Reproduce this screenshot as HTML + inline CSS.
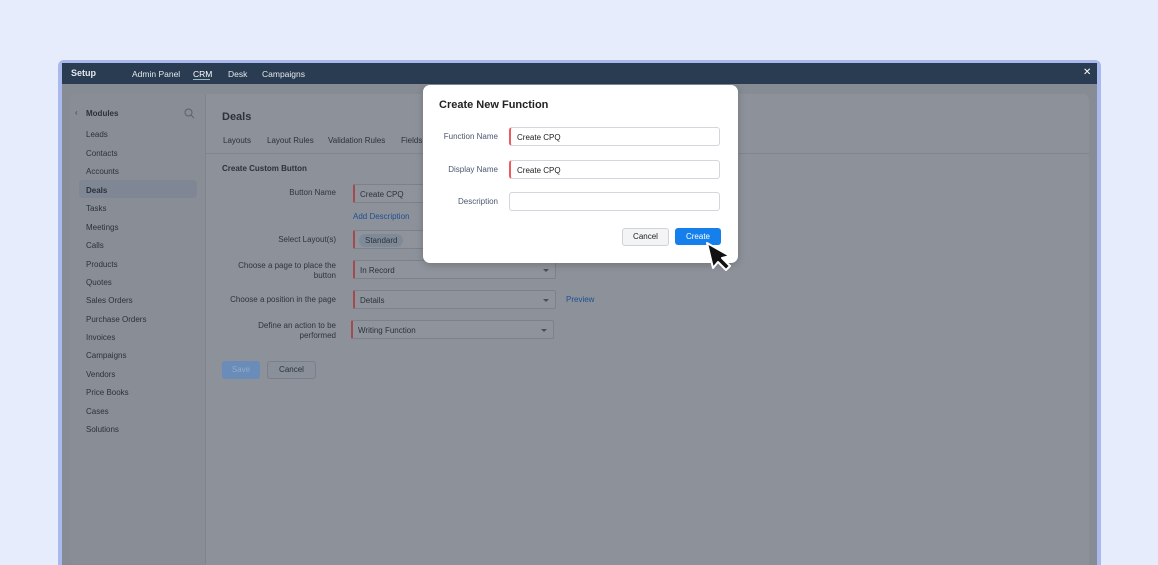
<!DOCTYPE html>
<html style="width:1158px;height:565px;overflow:hidden"><head><meta charset="utf-8"><style>
*{box-sizing:border-box;margin:0;padding:0}
body{width:1158px;height:565px;background:#e7ecfd;font-family:"Liberation Sans",sans-serif;position:relative;overflow:hidden}
.frame{position:absolute;left:58px;top:60px;width:1043px;height:515px;background:#a9b9ee;border-radius:6px}
.inner{position:absolute;left:62px;top:63px;width:1035px;height:510px;background:#868b94}
.hdr{position:absolute;left:0;top:0;width:100%;height:21px;background:#293c51;color:#e4e8ee;font-size:8.5px}
.hdr span{position:absolute;top:6px}
.side{position:absolute;left:8px;top:31px;width:136px;height:470px;background:#888d96;border-radius:6px 0 0 6px;border-right:1px solid #7e838c}
.main{position:absolute;left:144px;top:31px;width:883px;height:480px;background:#8d9199;border-radius:0 6px 0 0}
.t{position:absolute;font-size:8px;color:#2c323a;white-space:nowrap}
.lbl{position:absolute;font-size:8px;color:#2f353d;text-align:right;white-space:nowrap;line-height:10px}
.inp{position:absolute;height:19px;background:#8f939b;border:1px solid #7c818a;border-left:2px solid #a34a4f;border-radius:2px;font-size:8px;color:#2c323a;padding:5px 5px}
.car{position:absolute;right:6px;top:8px;border:3px solid transparent;border-top:3px solid #4a4f56}
.modal{position:absolute;left:423px;top:85px;width:315px;height:178px;background:#fff;border-radius:7px;box-shadow:0 2px 8px rgba(0,0,0,.2)}
.ml{position:absolute;font-size:8px;color:#4a5670;text-align:right;width:75px;left:0}
.mi{position:absolute;left:86px;width:211px;height:19px;border:1px solid #d3d6dc;border-radius:3px;font-size:8px;color:#222;padding:5px 6px}
.mi.r{border-left:2px solid #ee5a5f}
</style></head><body>
<div class="frame"></div>
<div class="inner">
<div class="hdr"><span style="left:9px;font-weight:bold;font-size:9px;top:5px">Setup</span><span style="left:70px">Admin Panel</span><span style="left:131px;color:#fff">CRM</span><div style="position:absolute;left:131px;top:16px;width:17px;height:1px;background:#9bb"></div><span style="left:166px">Desk</span><span style="left:200px">Campaigns</span><span style="left:1021px;font-size:10px;top:4px;color:#fff">✕</span></div>
<div class="side">
<div class="t" style="left:5px;top:14px;color:#444">‹</div>
<div class="t" style="left:16px;top:15px;font-weight:bold">Modules</div>
<svg style="position:absolute;left:114px;top:14px" width="11" height="11" viewBox="0 0 11 11"><circle cx="4.5" cy="4.5" r="3.5" fill="none" stroke="#5c626a"/><path d="M7 7l3 3" stroke="#5c626a"/></svg>
<div style="position:absolute;left:9px;top:86px;width:118px;height:18px;background:#7f8794;border-radius:4px"></div>
</div>
<div class="main">
<div class="t" style="left:16px;top:17px;font-size:11px;font-weight:bold">Deals</div>
<div class="t" style="left:17px;top:42px">Layouts</div>
<div class="t" style="left:61px;top:42px">Layout Rules</div>
<div class="t" style="left:122px;top:42px">Validation Rules</div>
<div class="t" style="left:195px;top:42px">Fields</div>
<div style="position:absolute;left:0;top:59px;width:883px;height:1px;background:#81868e"></div>
<div class="t" style="left:16px;top:70px;font-weight:bold">Create Custom Button</div>
</div>
</div>
<div class="t" style="left:86px;top:130px">Leads</div>
<div class="t" style="left:86px;top:149px">Contacts</div>
<div class="t" style="left:86px;top:167px">Accounts</div>
<div class="t" style="left:86px;top:186px;font-weight:bold">Deals</div>
<div class="t" style="left:86px;top:204px">Tasks</div>
<div class="t" style="left:86px;top:223px">Meetings</div>
<div class="t" style="left:86px;top:241px">Calls</div>
<div class="t" style="left:86px;top:260px">Products</div>
<div class="t" style="left:86px;top:278px">Quotes</div>
<div class="t" style="left:86px;top:296px">Sales Orders</div>
<div class="t" style="left:86px;top:315px">Purchase Orders</div>
<div class="t" style="left:86px;top:333px">Invoices</div>
<div class="t" style="left:86px;top:351px">Campaigns</div>
<div class="t" style="left:86px;top:370px">Vendors</div>
<div class="t" style="left:86px;top:388px">Price Books</div>
<div class="t" style="left:86px;top:407px">Cases</div>
<div class="t" style="left:86px;top:425px">Solutions</div>
<div class="lbl" style="right:822px;top:188px">Button Name</div>
<div class="inp" style="left:353px;top:184px;width:80px">Create CPQ</div>
<div class="t" style="left:353px;top:212px;color:#1f4f94">Add Description</div>
<div class="lbl" style="right:822px;top:235px">Select Layout(s)</div>
<div class="inp" style="left:353px;top:230px;width:80px;padding:3px 4px"><span style="background:#7f8a99;border-radius:8px;padding:2px 6px;display:inline-block">Standard</span></div>
<div class="lbl" style="right:822px;top:261px">Choose a page to place the<br>button</div>
<div class="inp" style="left:353px;top:260px;width:203px">In Record<div class="car"></div></div>
<div class="lbl" style="right:822px;top:295px">Choose a position in the page</div>
<div class="inp" style="left:353px;top:290px;width:203px">Details<div class="car"></div></div>
<div class="t" style="left:566px;top:295px;color:#1f4f94">Preview</div>
<div class="lbl" style="right:822px;top:321px">Define an action to be<br>performed</div>
<div class="inp" style="left:351px;top:320px;width:203px">Writing Function<div class="car"></div></div>
<div style="position:absolute;left:222px;top:361px;width:38px;height:18px;background:#6a8cb8;border-radius:3px;color:#93aacb;font-size:8px;text-align:center;line-height:18px">Save</div>
<div style="position:absolute;left:267px;top:361px;width:49px;height:18px;background:#8a9099;border:1px solid #7a7f88;border-radius:3px;color:#2c323a;font-size:8px;text-align:center;line-height:16px">Cancel</div>
<div class="modal">
<div style="position:absolute;left:16px;top:14px;font-size:11px;font-weight:bold;color:#222">Create New Function</div>
<div class="ml" style="top:47px">Function Name</div>
<div class="mi r" style="top:42px">Create CPQ</div>
<div class="ml" style="top:80px">Display Name</div>
<div class="mi r" style="top:75px">Create CPQ</div>
<div class="ml" style="top:112px">Description</div>
<div class="mi" style="top:107px"></div>
<div style="position:absolute;left:199px;top:143px;width:47px;height:18px;background:#f3f4f6;border:1px solid #cfd2d8;border-radius:3px;font-size:8px;color:#222;text-align:center;line-height:16px">Cancel</div>
<div style="position:absolute;left:252px;top:143px;width:46px;height:17px;background:#1580ec;border-radius:3px;font-size:8px;color:#fff;text-align:center;line-height:17px">Create</div>
</div>
<svg style="position:absolute;left:703px;top:240px" width="34" height="32" viewBox="0 0 34 32"><path d="M4 3 L27 16 L19 18 L27 26 L23 30 L15 22 L10 28 Z" fill="#111" stroke="#fff" stroke-width="2" stroke-linejoin="round"/></svg>
</body></html>
